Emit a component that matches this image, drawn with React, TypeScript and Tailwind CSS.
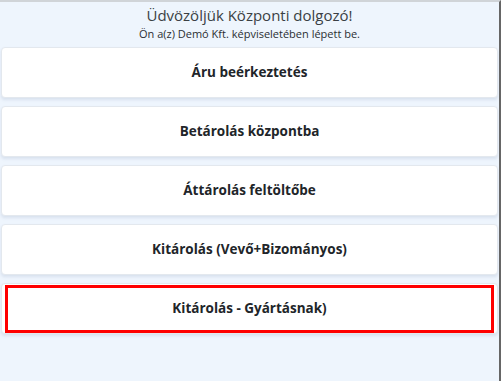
const items = [
  'Áru beérkeztetés',
  'Betárolás központba',
  'Áttárolás feltöltőbe',
  'Kitárolás (Vevő+Bizományos)',
  'Kitárolás - Gyártásnak)',
];

export default function App() {
  return (
    <div
      className="w-[501px] h-[381px] overflow-hidden bg-[#eef5fd] border-t-2 border-t-[#d0d4d8] border-r-2 border-r-[#666666] text-[#212529]"
      style={{ fontFamily: '"Open Sans", "Noto Sans", sans-serif' }}
    >
      {/* Header */}
      <div className="flex flex-col items-center pt-[3px] h-[45px]">
        <p className="text-[15px] leading-[20px] text-[#3a3f44]">Üdvözöljük Központi dolgozó!</p>
        <p className="text-[11px] leading-[18px] text-[#2b2f33]">Ön a(z) Demó Kft. képviseletében lépett be.</p>
      </div>

      {/* Menu */}
      <div className="flex flex-col gap-[8px] pl-[1px] pr-[1px]">
        {items.map((label, i) => (
          <div
            key={label}
            className="relative h-[51px] rounded-[4px] bg-white border border-[#e3e8ee] shadow-[0_2px_3px_rgba(120,140,170,0.18)] flex items-center justify-center"
          >
            {i === items.length - 1 && (
              <div className="absolute left-[3px] right-[3px] top-[1px] bottom-[0px] border-[3px] border-[#ff0000]" />
            )}
            <span className="relative text-[13.5px] font-bold text-[#212529]">{label}</span>
          </div>
        ))}
      </div>
    </div>
  );
}
